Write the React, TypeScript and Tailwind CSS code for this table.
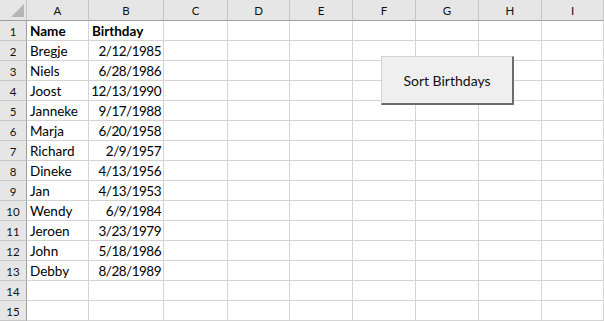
const cols = ['A', 'B', 'C', 'D', 'E', 'F', 'G', 'H', 'I'];

const rows: [string, string][] = [
  ['Name', 'Birthday'],
  ['Bregje', '2/12/1985'],
  ['Niels', '6/28/1986'],
  ['Joost', '12/13/1990'],
  ['Janneke', '9/17/1988'],
  ['Marja', '6/20/1958'],
  ['Richard', '2/9/1957'],
  ['Dineke', '4/13/1956'],
  ['Jan', '4/13/1953'],
  ['Wendy', '6/9/1984'],
  ['Jeroen', '3/23/1979'],
  ['John', '5/18/1986'],
  ['Debby', '8/28/1989'],
  ['', ''],
  ['', ''],
];

export default function App() {
  return (
    <div className="relative w-[604px] h-[321px] bg-white overflow-hidden font-['Lato',sans-serif] text-black">
      <div className="grid grid-cols-[27px_62px_75px_64px_62px_63px_63px_63px_63px_62px]">
        {/* corner */}
        <div className="h-[21px] bg-[#e6e6e6] border-r border-b border-r-[#c6c6c6] border-b-[#9f9f9f] relative">
          <svg className="absolute left-[11px] top-[4px]" width="13" height="13" viewBox="0 0 13 13">
            <polygon points="13,0 13,13 0,13" fill="#b5b5b5" />
          </svg>
        </div>
        {cols.map((c) => (
          <div
            key={c}
            className="h-[21px] bg-[#e6e6e6] border-r border-b border-r-[#c6c6c6] border-b-[#9f9f9f] flex items-center justify-center text-[11.5px] leading-none pt-[1px] text-[#111]"
          >
            {c}
          </div>
        ))}

        {rows.map(([name, date], i) => (
          <div key={i} className="contents">
            <div className="h-[20px] bg-[#e6e6e6] border-r border-b border-r-[#9f9f9f] border-b-[#c6c6c6] flex justify-center text-[11.5px] leading-[17px] pt-[2px] text-[#111]">
              {i + 1}
            </div>
            <div className={`h-[20px] border-r border-b border-[#d4d4d4] pl-[3px] text-[13.5px] leading-[17px] pt-[2px] whitespace-nowrap ${i === 0 ? 'font-bold' : ''}`}>
              {name}
            </div>
            <div
              className={`h-[20px] border-r border-b border-[#d4d4d4] text-[13.5px] leading-[17px] pt-[2px] whitespace-nowrap ${
                i === 0 ? 'font-bold pl-[3px]' : 'text-right pr-[2px] tracking-[-0.5px]'
              }`}
            >
              {date}
            </div>
            {cols.slice(2).map((c) => (
              <div key={c} className="h-[20px] border-r border-b border-[#d4d4d4]" />
            ))}
          </div>
        ))}
      </div>

      <button className="absolute left-[381px] top-[56px] w-[133px] h-[49px] bg-[#efefef] border border-[#d2d2d2] border-r-2 border-b-2 border-r-[#6b6b6b] border-b-[#6b6b6b] text-[14px] text-[#111] font-['Lato',sans-serif] flex items-center justify-center pt-[1px]">
        Sort Birthdays
      </button>
    </div>
  );
}
